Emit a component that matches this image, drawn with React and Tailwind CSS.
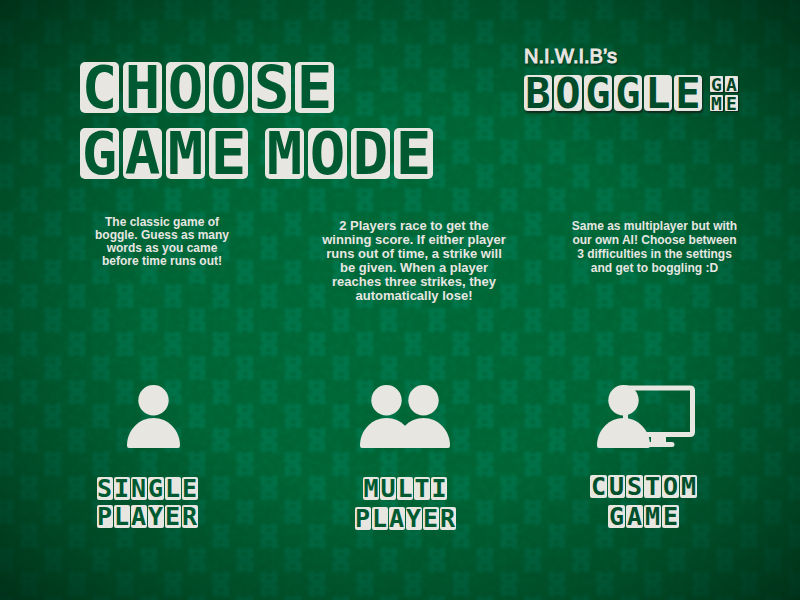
const TILE_SIZES = {
  large: {
    row: "gap-1",
    tile: "h-[51px] w-[39px] rounded-[5px] text-[59px] leading-[52px] text-[#005a31]",
  },
  logo: {
    row: "gap-[2px]",
    tile: "h-9 w-[28px] rounded-[4px] text-[42px] leading-[37px] text-[#004c2a] shadow-[1px_2px_2px_#10281c]",
  },
  small: {
    row: "gap-px",
    tile: "h-[23px] w-4 rounded-[2px] text-[25px] leading-[24px] text-[#005a31]",
  },
  wide: {
    row: "gap-px",
    tile: "h-[23px] w-[17px] rounded-[2px] text-[25px] leading-[24px] text-[#00502c]",
  },
  mini: {
    row: "gap-[2px]",
    tile: "h-4 w-[13px] rounded-[1px] text-[18px] leading-[17px] text-[#004425] shadow-[1px_1px_1px_#10281c]",
  },
};

function Tiles({ word, size }) {
  const s = TILE_SIZES[size];
  return (
    <span className={`flex ${s.row}`} role="text" aria-label={word}>
      {[...word].map((letter, i) => (
        <span
          key={i}
          className={`flex shrink-0 justify-center bg-[#e8e6e1] font-['DejaVu_Sans_Mono',monospace] font-bold ${s.tile}`}
        >
          {letter}
        </span>
      ))}
    </span>
  );
}

function Person({ x }) {
  return (
    <g transform={`translate(${x} 0)`}>
      <circle cx="26.5" cy="15.2" r="15.2" />
      <path d="M2 63Q0 63 0 60.500C0 45 12 33 26.500 33S53 45 53 60.500Q53 63 51 63Z" />
    </g>
  );
}

function SingleIcon() {
  return (
    <svg width="53" height="63" viewBox="0 0 53 63" fill="#e8e6e1" aria-hidden="true">
      <Person x={0} />
    </svg>
  );
}

function MultiIcon() {
  return (
    <svg width="90" height="63" viewBox="0 0 90 63" fill="#e8e6e1" aria-hidden="true">
      <Person x={0} />
      <Person x={37} />
      <path d="M38 63V46L45 41L52 46V63Z" />
    </svg>
  );
}

function ComputerIcon() {
  return (
    <svg width="98" height="63" viewBox="0 0 98 63" fill="#e8e6e1" aria-hidden="true">
      <Person x={0} />
      <path d="M26 28h5v8h-5Z" />
      <path
        d="M26 3H93Q95.500 3 95.500 5.500V47Q95.500 49.500 93 49.500H47"
        fill="none"
        stroke="#e8e6e1"
        strokeWidth="5"
      />
      <path d="M54 50H69V57H75Q77.500 57 77.500 59.500T75 62H49V57H54ZM49 52h2.500v5H49Z" />
    </svg>
  );
}

const MODES = [
  {
    id: "single",
    lines: ["The classic game of", "boggle. Guess as many", "words as you came", "before time runs out!"],
    text: "pt-px text-[12px] leading-[13px]",
    Icon: SingleIcon,
    words: ["SINGLE", "PLAYER"],
    size: "small",
    label: "gap-[5px] pt-[29px] pr-3",
  },
  {
    id: "multi",
    lines: [
      "2 Players race to get the",
      "winning score. If either player",
      "runs out of time, a strike will",
      "be given. When a player",
      "reaches three strikes, they",
      "automatically lose!",
    ],
    text: "pt-1 text-[13px] leading-[14px]",
    Icon: MultiIcon,
    words: ["MULTI", "PLAYER"],
    size: "small",
    label: "gap-[7px] pt-[29px]",
  },
  {
    id: "custom",
    lines: [
      "Same as multiplayer but with",
      "our own AI! Choose between",
      "3 difficulties in the settings",
      "and get to boggling :D",
    ],
    text: "pt-1 text-[12px] leading-[14px]",
    Icon: ComputerIcon,
    words: ["CUSTOM", "GAME"],
    size: "wide",
    label: "gap-[7px] pt-[27px] pr-1",
  },
];

function Mode({ mode }) {
  const { Icon } = mode;
  return (
    <article className="flex flex-col items-center">
      <p
        id={`${mode.id}-about`}
        className={`min-h-[170px] pl-[18px] text-center font-bold whitespace-nowrap ${mode.text}`}
      >
        {mode.lines.map((line) => (
          <span key={line} className="block">
            {line}
          </span>
        ))}
      </p>
      <button type="button" aria-describedby={`${mode.id}-about`} className="flex cursor-pointer flex-col items-center">
        <Icon />
        <span className={`flex flex-col items-center ${mode.label}`}>
          {mode.words.map((word) => (
            <Tiles key={word} word={word} size={mode.size} />
          ))}
        </span>
      </button>
    </article>
  );
}

function Wallpaper() {
  return (
    <svg className="col-start-1 row-start-1 h-full w-full" aria-hidden="true">
      <defs>
        <filter id="soft" x="-30%" y="-30%" width="160%" height="160%">
          <feGaussianBlur stdDeviation="1.2" />
        </filter>
        <filter id="mottle" x="0" y="0" width="100%" height="100%">
          <feTurbulence type="fractalNoise" baseFrequency="0.14" numOctaves="2" seed="4" />
          <feColorMatrix values="0 0 0 0 0  0 0 0 0 0.26  0 0 0 0 0.1  0 2 0 0 -0.75" />
        </filter>
        <g id="motif" fill="#008a66" fillOpacity="0.4" filter="url(#soft)">
          <path
            fillRule="evenodd"
            d="M-5-13L0-10L5-13L9-11L8-7L9-3L5 0L9 3L8 7L9 11L5 13L0 10L-5 13L-9 11L-8 7L-9 3L-5 0L-9-3L-8-7L-9-11ZM-3-6L0-4L3-6L0-8ZM-3 6L0 8L3 6L0 4Z"
          />
        </g>
        <pattern id="damask" width="48" height="48" patternUnits="userSpaceOnUse">
          <use href="#motif" x="5" y="32" />
          <use href="#motif" x="53" y="32" />
          <use href="#motif" x="29" y="8" />
          <use href="#motif" x="29" y="56" />
        </pattern>
        <radialGradient id="vignette" cx="50%" cy="50%" r="72%">
          <stop offset="0" stopColor="#00200e" stopOpacity="0" />
          <stop offset="0.45" stopColor="#00200e" stopOpacity="0.06" />
          <stop offset="0.75" stopColor="#00200e" stopOpacity="0.4" />
          <stop offset="1" stopColor="#00200e" stopOpacity="0.8" />
        </radialGradient>
      </defs>
      <rect width="100%" height="100%" fill="#006837" />
      <rect width="100%" height="100%" filter="url(#mottle)" opacity="0.18" />
      <rect width="100%" height="100%" fill="url(#damask)" />
      <rect width="100%" height="100%" fill="url(#vignette)" />
    </svg>
  );
}

export default function App() {
  return (
    <div className="grid min-h-screen bg-[#005a31] font-['Liberation_Sans',Arial,sans-serif] text-[#e8e6e1]">
      <Wallpaper />
      <main className="z-10 col-start-1 row-start-1 pb-10">
        <header className="flex items-start justify-between pt-[45px] pr-[62px] pl-20">
          <h1 className="flex flex-col gap-[15px] pt-[17px]">
            <Tiles word="CHOOSE" size="large" />
            <span className="flex gap-[17px]">
              <Tiles word="GAME" size="large" />
              <Tiles word="MODE" size="large" />
            </span>
          </h1>
          <div className="flex flex-col">
            <p className="h-[30px] text-[20px] leading-[23px] [-webkit-text-stroke:1px_#e8e6e1] [text-shadow:1px_2px_2px_#10281c]">
              N.I.W.I.B’s
            </p>
            <div className="flex items-center gap-2">
              <Tiles word="BOGGLE" size="logo" />
              <span className="flex flex-col gap-[3px]">
                <Tiles word="GA" size="mini" />
                <Tiles word="ME" size="mini" />
              </span>
            </div>
          </div>
        </header>
        <section
          aria-label="Game modes"
          className="mt-9 grid grid-cols-[252fr_252fr_229fr] pr-10 pl-[27px]"
        >
          {MODES.map((mode) => (
            <Mode key={mode.id} mode={mode} />
          ))}
        </section>
      </main>
    </div>
  );
}
